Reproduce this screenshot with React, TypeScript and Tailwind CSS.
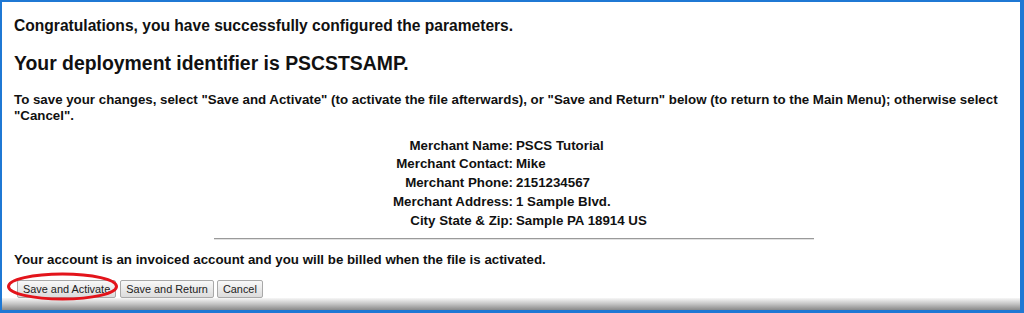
import React from "react";

const merchant = [
  ["Merchant Name:", "PSCS Tutorial"],
  ["Merchant Contact:", "Mike"],
  ["Merchant Phone:", "2151234567"],
  ["Merchant Address:", "1 Sample Blvd."],
  ["City State & Zip:", "Sample PA 18914 US"],
];

function Btn({ label }: { label: string }) {
  return (
    <button className="h-[18px] px-[5px] border border-[#a9a9a9] rounded-[2px] bg-linear-to-b from-[#f8f8f8] to-[#dcdcdc] text-[10.9px] leading-[16px] font-normal text-[#222]">
      {label}
    </button>
  );
}

export default function App() {
  return (
    <div
      className="w-[1024px] h-[313px] bg-white flex flex-col border-t-2 border-l-2 border-r-4 border-b-[3px] border-[#1f78d4] overflow-hidden text-[#111]"
      style={{ fontFamily: '"Liberation Sans", Arial, sans-serif' }}
    >
      <div className="flex flex-col pl-[12px] pr-[6px] font-bold">
        <p className="mt-[14.6px] text-[15.6px] leading-[18px]">
          Congratulations, you have successfully configured the parameters.
        </p>
        <h2 className="mt-[17.7px] text-[19.4px] leading-[22px]">
          Your deployment identifier is PSCSTSAMP.
        </h2>
        <p className="mt-[18px] text-[13.3px] leading-[16px]">
          To save your changes, select "Save and Activate" (to activate the
          file afterwards), or "Save and Return" below (to return to the Main
          Menu); otherwise select "Cancel".
        </p>
        <table className="mt-[12.5px] w-full text-[13.3px] border-collapse">
          <tbody>
            {merchant.map(([k, v]) => (
              <tr key={k}>
                <td className="w-1/2 text-right pr-[1px] py-0 h-[18.7px] leading-[18.7px]">
                  {k}
                </td>
                <td className="w-1/2 text-left pl-[2px] py-0 h-[18.7px] leading-[18.7px]">
                  {v}
                </td>
              </tr>
            ))}
          </tbody>
        </table>
        <div className="mt-[8px] mx-auto w-[60%] border-t border-[#9a9a9a] border-b border-b-[#e2e2e2]" />
        <p className="mt-[12px] text-[13.3px] leading-[16px]">
          Your account is an invoiced account and you will be billed when the
          file is activated.
        </p>
        <div className="mt-[12px] ml-[3px] flex gap-[3px] items-center">
          <div className="relative flex mr-[1px]">
            <Btn label="Save and Activate" />
            <svg
              className="absolute left-[-10px] top-[-8px] pointer-events-none"
              width="112"
              height="30"
              viewBox="0 0 112 30"
            >
              <ellipse
                cx="55.5"
                cy="14.5"
                rx="54"
                ry="12.5"
                fill="none"
                stroke="#e3141b"
                strokeWidth="3"
              />
            </svg>
          </div>
          <Btn label="Save and Return" />
          <Btn label="Cancel" />
        </div>
      </div>
      <div className="mt-auto h-[13px] bg-linear-to-b from-[#f7f7f7] via-[#c4c4c4] to-[#8a8a8a]" />
    </div>
  );
}
